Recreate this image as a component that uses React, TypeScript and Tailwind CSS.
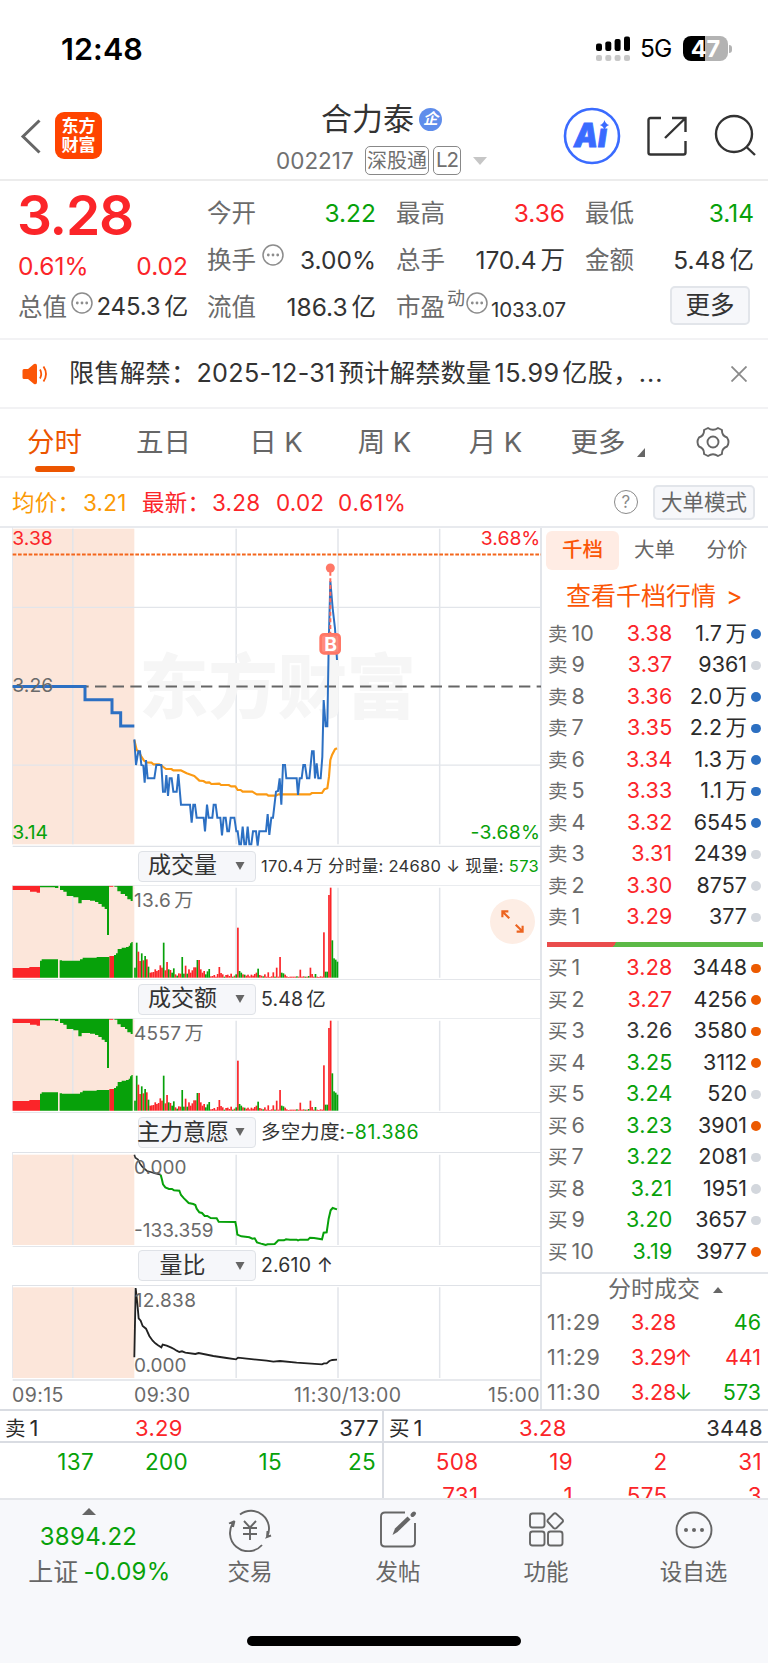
import type { ReactNode } from 'react';
import clsx from 'clsx';

const AUCTION = '#fce6da';
const RED = '#fb2529';
const GREEN = '#07a10a';

const sells = [
  ['10', '3.38', '1.7万', 'b'],
  ['9', '3.37', '9361', 'g'],
  ['8', '3.36', '2.0万', 'b'],
  ['7', '3.35', '2.2万', 'b'],
  ['6', '3.34', '1.3万', 'b'],
  ['5', '3.33', '1.1万', 'b'],
  ['4', '3.32', '6545', 'b'],
  ['3', '3.31', '2439', 'g'],
  ['2', '3.30', '8757', 'g'],
  ['1', '3.29', '377', 'g'],
];

const buys = [
  ['1', '3.28', '3448', 'o'],
  ['2', '3.27', '4256', 'o'],
  ['3', '3.26', '3580', 'o'],
  ['4', '3.25', '3112', 'o'],
  ['5', '3.24', '520', 'g'],
  ['6', '3.23', '3901', 'o'],
  ['7', '3.22', '2081', 'g'],
  ['8', '3.21', '1951', 'g'],
  ['9', '3.20', '3657', 'g'],
  ['10', '3.19', '3977', 'o'],
];

const trades = [
  { time: '11:29', price: '3.28', arrow: '', qty: '46', up: false },
  { time: '11:29', price: '3.29', arrow: '↑', qty: '441', up: true },
  { time: '11:30', price: '3.28', arrow: '↓', qty: '573', up: false },
];

// one entry per minute: height + colour
const minuteBars =
  '30g 105g 78r 50r 73g 52r 65g 55r 33g 15r 16r 17r 25r 20r 23r 37r 30r 105g 22r 47r 25g 23r 15g 28g 10r 6g 13r 12r 62g 12g 36r 12g 25r 15r 22r 31r 31r 53g 53r 25r 15r 20r 10g 19g 26g 4r 5r 8r 3r 11r 32r 14r 10r 3g 8r 9r 5r 12r 3g 6r 10g 150r 20g 15g 10r 9g 6r 9r 4r 9r 6r 11r 15r 27g 8r 6r 4g 10r 3r 16r 2r 4r 16r 3g 30r 3r 62r 15g 13g 9r 4r 2r 3r 3r 3r 3r 4g 3r 24r 3r 4r 3g 3r 5g 30r 11r 3r 11g 3r 2r 4r 3r 136r 18g 18g 248r 270r 112g 58g 54g 48g'.split(' ');

const priceLine =
  '403,658 408,735 415,694 420,694 424,735 430,737 434,788 438,720 443,775 463,775 469,735 484,735 489,815 495,815 499,765 504,828 509,775 515,775 520,815 530,815 535,762 543,854 570,854 575,908 580,854 585,854 590,893 611,893 615,934 621,854 626,893 637,893 641,854 647,854 652,893 661,893 666,946 671,893 677,893 682,934 687,934 692,893 703,893 709,934 713,934 718,973 723,973 728,920 733,973 738,973 743,920 748,973 754,973 759,934 768,934 773,977 778,934 798,934 803,882 808,945 814,893 819,893 828,815 834,813 839,775 844,854 849,735 855,735 859,775 890,775 894,825 899,775 905,775 910,735 915,735 921,775 928,775 936,694 941,694 945,775 950,730 955,775 962,775 967,710 971,540 977,619 982,619 986,380 991,183 998,265 1005,325 1011,420';

const avgLine =
  '403,660 410,690 416,694 424,710 432,722 440,727 455,728 460,733 478,733 486,738 498,747 514,747 520,751 542,751 560,760 583,768 598,782 610,783 618,788 628,787 634,792 658,791 663,795 686,795 693,799 706,799 713,810 722,810 728,815 757,815 770,823 800,823 805,827 828,827 835,823 930,823 936,819 966,819 973,808 982,805 987,770 991,720 996,705 1005,688 1011,685';

// number with its 万 / 亿 unit set slightly apart
function Num({ v }: { v: string }) {
  const unit = v.match(/[万亿]$/)?.[0];
  if (!unit) return <>{v}</>;
  return (
    <>
      {v.slice(0, -1)}
      <span className="ml-[0.16em]">{unit}</span>
    </>
  );
}

function Dots() {
  return (
    <svg viewBox="0 0 22 22" className="h-[22px] w-[22px] shrink-0" fill="none">
      <circle cx="11" cy="11" r="10" stroke="#8c8c8c" strokeWidth="1.5" />
      <g fill="#8c8c8c">
        <circle cx="6.3" cy="11" r="1.4" />
        <circle cx="11" cy="11" r="1.4" />
        <circle cx="15.7" cy="11" r="1.4" />
      </g>
    </svg>
  );
}

function Stat({ label, value, color = 'text-[#333]', extra }: { label: string; value: string; color?: string; extra?: ReactNode }) {
  return (
    <div className="flex h-[47px] w-[169px] items-center justify-between whitespace-nowrap">
      <span className="flex items-center text-[24.5px] text-[#6b6b6b]">
        {label}
        {extra}
      </span>
      <span className={clsx('text-[24.5px]', color)}>
        <Num v={value} />
      </span>
    </div>
  );
}

function StatusBar() {
  return (
    <div className="flex h-[96px] items-center justify-between pr-[36px] pl-[61px]">
      <span className="pt-[2px] text-[30.5px] font-semibold tracking-[0.1px] text-black">12:48</span>
      <div className="flex items-center pt-[2px]">
        <svg width="34" height="26" viewBox="0 0 34 26">
          <g fill="#000">
            <rect x="0" y="7.5" width="6" height="7.5" rx="2" />
            <rect x="9.3" y="5.5" width="6" height="9.5" rx="2" />
            <rect x="18.6" y="3" width="6" height="12" rx="2" />
            <rect x="28" y="0.5" width="6" height="14.5" rx="2" />
          </g>
          <g fill="#c8c8c8">
            <rect x="0" y="19" width="6" height="6" rx="2" />
            <rect x="9.3" y="19" width="6" height="6" rx="2" />
            <rect x="18.6" y="19" width="6" height="6" rx="2" />
            <rect x="28" y="19" width="6" height="6" rx="2" />
          </g>
        </svg>
        <span className="ml-[10px] w-[32px] text-[24.5px] tracking-[-0.8px] whitespace-nowrap text-black">5G</span>
        <div className="ml-[11px] flex h-[25px] w-[45px] items-center justify-center rounded-[8px] bg-[linear-gradient(to_right,#000_48%,#b3b3b3_48%)] text-[23.5px] font-bold text-white">
          47
        </div>
        <div className="ml-[1px] h-[8px] w-[3px] rounded-r-full bg-[#b3b3b3]" />
      </div>
    </div>
  );
}

function Header() {
  return (
    <header className="flex h-[85px] border-b-2 border-[#ececec]">
      <svg className="mt-[23px] ml-[20px] h-[35px] w-[22px]" viewBox="0 0 22 35" fill="none">
        <path d="M19.5 1.5 3 17.5l16.5 16" stroke="#666" strokeWidth="3" />
      </svg>
      <div className="mt-[16px] ml-[13px] flex h-[47px] w-[47px] flex-col items-center justify-center rounded-[9px] bg-[#ff4400] text-[17px] leading-[19px] font-bold text-white">
        <span>东方</span>
        <span>财富</span>
      </div>
      <div className="ml-[150px] flex w-[240px] flex-col">
        <div className="mt-[4px] flex h-[38px] items-center justify-center pl-[19px] text-[31px] text-[#333]">
          合力泰
          <span className="ml-[5px] flex h-[23px] w-[23px] items-center justify-center rounded-full bg-[#5f8deb] text-[15px] font-bold text-white italic">
            企
          </span>
        </div>
        <div className="mt-[8px] flex h-[29px] items-center pl-[24px] text-[#707070]">
          <span className="w-[89px] text-[22.5px] whitespace-nowrap">002217</span>
          <span className="flex h-[29px] w-[64px] shrink-0 items-center justify-center rounded-[5px] border border-[#888] text-[20px]">深股通</span>
          <span className="ml-[4px] flex h-[29px] w-[28px] shrink-0 items-center justify-center rounded-[5px] border border-[#888] text-[20.5px] tracking-[-1px]">L2</span>
          <svg className="ml-[12px] h-[8px] w-[14px] shrink-0" viewBox="0 0 14 8">
            <path d="M0 0h14L7 8z" fill="#c6c6c6" />
          </svg>
        </div>
      </div>
      <svg className="mt-[11px] ml-[71px] h-[58px] w-[58px] shrink-0" viewBox="0 0 58 58">
        <circle cx="29" cy="29" r="27" fill="none" stroke="#3a6bff" strokeWidth="2.6" />
        <text x="11" y="40" fontSize="33" fontWeight="900" fontStyle="italic" fill="#3a6bff" stroke="#3a6bff" strokeWidth="0.8" fontFamily="Inter" textLength="33" lengthAdjust="spacingAndGlyphs">
          Aı
        </text>
        <path d="M41.500 13q1.200 4.200 4.700 5-3.500 1-4.700 5-1.200-4-4.700-5 3.500-.8 4.700-5z" fill="#3a6bff" />
      </svg>
      <svg className="mt-[20px] ml-[26px] h-[40px] w-[40px] shrink-0" viewBox="0 0 40 40" fill="none" stroke="#333" strokeWidth="2.4">
        <path d="M14 2H3.500Q1.500 2 1.500 4V36.500Q1.500 38.500 3.500 38.500H36.500Q38.500 38.500 38.500 36.500V25M25 2H38.500V16M38 2.500 18 22" />
      </svg>
      <svg className="mt-[18px] ml-[27px] h-[43px] w-[43px] shrink-0" viewBox="0 0 43 43" fill="none" stroke="#333" strokeWidth="2.400">
        <circle cx="20" cy="20" r="18" />
        <path d="M32.500 33l8.500 8" />
      </svg>
    </header>
  );
}

function Quote() {
  return (
    <section className="flex h-[159px] border-b-2 border-[#f2f2f4] pl-[19px]">
      <div className="w-[169px]">
        <div className="mt-[6px] -ml-[2px] h-[56px] text-[55px] leading-[56px] font-semibold tracking-[-1.2px] text-[#fb2529]">3.28</div>
        <div className="mt-[8px] flex h-[32px] items-center justify-between text-[24.5px] text-[#fb2529]">
          <span className="-ml-[1px]">0.61%</span>
          <span>0.02</span>
        </div>
        <div className="mt-[1px] flex h-[47px] items-center justify-between text-[24.5px]">
          <span className="-ml-[1px] text-[#6b6b6b]">总值</span>
          <span className="-mt-[10px]">
            <Dots />
          </span>
          <span className="text-[24px] tracking-[-0.2px] text-[#333]">
            <Num v="245.3亿" />
          </span>
        </div>
      </div>
      <div className="mt-[9px] ml-[19px] grid grid-cols-[189px_189px_169px] content-start">
        <Stat label="今开" value="3.22" color="text-[#07a10a]" />
        <Stat label="最高" value="3.36" color="text-[#fb2529]" />
        <Stat label="最低" value="3.14" color="text-[#07a10a]" />
        <Stat label="换手" value="3.00%" extra={<span className="-mt-[10px] ml-[6px]"><Dots /></span>} />
        <Stat label="总手" value="170.4万" />
        <Stat label="金额" value="5.48亿" />
        <Stat label="流值" value="186.3亿" />
        <div className="flex h-[47px] w-[175px] items-center text-[24.500px] whitespace-nowrap text-[#6b6b6b]">
          市盈
          <span className="-mt-[18px] ml-[2px] text-[18px]">动</span>
          <span className="-mt-[10px] ml-[1px]">
            <Dots />
          </span>
          <span className="mt-[5px] ml-[3px] text-[20.500px] tracking-[-0.1px] text-[#333]">1033.07</span>
        </div>
        <div className="flex h-[42px] w-[165px] items-center justify-end">
          <button className="h-[39px] w-[80px] rounded-[5px] border-2 border-[#e2e5ea] bg-[#f6f7fa] text-[24.500px] leading-[34px] text-[#333]">更多</button>
        </div>
      </div>
    </section>
  );
}

function Notice() {
  return (
    <section className="flex h-[69px] items-center border-b-2 border-[#f2f2f4]">
      <svg className="ml-[22px] h-[22px] w-[26px]" viewBox="0 0 26 22" fill="none">
        <path d="M0.500 7.500Q0.500 6 2 6H6L12 1Q15 0 15 3V19Q15 22 12 21L6 16H2Q0.500 16 0.500 14.500Z" fill="#fb5607" />
        <path d="M18 6.500Q20.500 11 18 15.500M21.500 3.500Q26.500 11 21.500 18.500" stroke="#fb5607" strokeWidth="1.8" />
      </svg>
      <span className="ml-[21px] w-[611px] text-[25.200px] tracking-[0.3px] whitespace-nowrap text-[#333]">
        限售解禁：<span className="mr-[3px]">2025-12-31</span>预计解禁数量<span className="mx-[3px]">15.99</span>亿股，<span className="tracking-[1px]">...</span>
      </span>
      <svg className="ml-[51px] h-[16px] w-[16px]" viewBox="0 0 16 16" stroke="#8a8a8a" strokeWidth="1.8">
        <path d="M0.500 0.500l15 15M15.500 0.500l-15 15" />
      </svg>
    </section>
  );
}

function Tabs() {
  return (
    <nav className="flex h-[69px] items-center border-b-2 border-[#f2f2f4] text-[27.5px] text-[#666]">
      <div className="relative w-[109px] text-center text-[#ec5500]">
        分时
        <span className="absolute top-[40px] left-[35px] h-[6px] w-[40px] rounded-full bg-[#ec5500]" />
      </div>
      <span className="w-[109px] text-center">五日</span>
      <span className="w-[116px] text-center">日 K</span>
      <span className="w-[101px] text-center">周 K</span>
      <span className="w-[121px] text-center">月 K</span>
      <span className="w-[84px] text-center">更多</span>
      <svg className="mt-[19px] -ml-[3px] h-[9px] w-[8px]" viewBox="0 0 8 9">
        <path d="M8 0V9H0z" fill="#666" />
      </svg>
      <svg className="-mt-[1px] ml-[51px] h-[32px] w-[34px]" viewBox="0 0 34 32" fill="none" stroke="#666" strokeWidth="1.9">
        <path d="M12 2Q17 5.500 22 2L26 4Q25.500 9.500 31 11.500Q34 16 31 20.500Q25.500 22.500 26 28L22 30Q17 26.500 12 30L8 28Q8.500 22.500 3 20.500Q0 16 3 11.500Q8.500 9.500 8 4Z" strokeLinejoin="round" />
        <circle cx="17" cy="16" r="5.500" />
      </svg>
    </nav>
  );
}

function InfoRow() {
  return (
    <div className="flex h-[48px] items-center text-[22.5px] tracking-[0.2px] whitespace-nowrap text-[#fb2529]">
      <span className="ml-[12px] w-[71px] text-[#fb9a06]">均价：</span>
      <span className="w-[59px] text-[#fb9a06]">3.21</span>
      <span className="w-[70px]">最新：</span>
      <span className="w-[64px]">3.28</span>
      <span className="w-[62px]">0.02</span>
      <span className="w-[276px] tracking-[0.8px]">0.61%</span>
      <span className="flex h-[24px] w-[24px] items-center justify-center rounded-full border-[1.5px] border-[#8a8a8a] text-[17px] text-[#8a8a8a]">?</span>
      <button className="ml-[15px] h-[35px] w-[102px] rounded-[5px] border-2 border-[#e2e5ea] bg-[#f6f7fa] text-[21.500px] leading-[30px] tracking-normal text-[#666]">大单模式</button>
    </div>
  );
}

// vertical grid lines shared by all the panels
function Grid({ top, bottom }: { top: number; bottom: number }) {
  return (
    <g>
      <rect x="38" y={top} width="365" height={bottom - top} fill={AUCTION} />
      <path d={`M218.500 ${top}V${bottom}M708.500 ${top}V${bottom}M1014 ${top}V${bottom}M1319 ${top}V${bottom}`} stroke="#e2e5ea" strokeWidth="4.500" />
      <path d={`M37.500 ${top - 8}V${bottom}`} stroke="#e2e5ea" strokeWidth="2.500" />
    </g>
  );
}

function PricePanel() {
  return (
    <svg className="-mt-[1px] block h-[320px] w-[541px]" viewBox="0 21 1623 960" fontFamily="Inter" fontSize="58">
      <Grid top={26} bottom={973} />
      <path d="M38 262H1623M38 735.500H1623" stroke="#e2e5ea" strokeWidth="4" />
      <path d="M38 979.500H1623" stroke="#dfe2e7" strokeWidth="4" />
      <text x="418" y="578" fontSize="212" fontWeight="900" fontFamily="'Noto Sans CJK SC'" fill="#f6f6f6" textLength="830" lengthAdjust="spacingAndGlyphs">
        东方财富
      </text>
      <path d="M38 103.500H1623" stroke="#f4661c" strokeWidth="6" strokeDasharray="11 5" />
      <path d="M38 499.500H1623" stroke="#666" strokeWidth="6" strokeDasharray="34 19" strokeDashoffset="18" />
      <text x="37" y="76" fill={RED}>3.38</text>
      <text x="37" y="957" fill={GREEN}>3.14</text>
      <text x="1621" y="76" fill={RED} textAnchor="end">3.68%</text>
      <text x="1621" y="957" fill={GREEN} textAnchor="end" letterSpacing="0.8">-3.68%</text>
      <path d="M38 499.500H255V539H336V578H362V618H403" fill="none" stroke="#2c70c3" strokeWidth="9" />
      <text x="37" y="516" fill="#6a6a6a">3.26</text>
      <polyline points={avgLine} fill="none" stroke="#fb9a14" strokeWidth="6.500" strokeLinejoin="round" />
      <polyline points={priceLine} fill="none" stroke="#2c70c3" strokeWidth="6" />
      <rect x="962" y="343" width="57" height="57" rx="10" fill="#fff" fillOpacity="0.600" stroke="#ff7766" strokeWidth="8" />
      <rect x="962" y="343" width="57" height="57" rx="10" fill="#ff7766" fillOpacity="0.850" />
      <path d="M991 155V339" stroke="#ff6a5a" strokeWidth="6" strokeDasharray="12 8" />
      <circle cx="991" cy="144" r="13.500" fill="#ff7766" />
      <text x="992" y="392" textAnchor="middle" fill="#fff" fontSize="58" fontWeight="700">B</text>
    </svg>
  );
}

function VolumePanel({ value, unit }: { value: string; unit: string }) {
  return (
    <svg className="block h-[95px] w-[541px]" viewBox="0 135 1623 285" fontFamily="Inter, 'Noto Sans CJK SC'" fontSize="57">
      <Grid top={143} bottom={413} />
      <rect x="38" y="137" width="365" height="10" fill={AUCTION} />
      <path d="M38 137V150H90V155H110V158H120V137ZM327 137V140H340V137ZM38 413V384H88V381H120V413ZM328 413V348H342V413Z" fill={RED} />
      <path
        d="M120 137V142H165V144H175V137ZM180 137V150H190V155H200V168H220V172H235V190H245V180H270V182H285V186H295V192H305V200H314V207H321V285H327V137ZM343 137V140H352V154H362V162H375V168H382V178H392V183H398V137ZM120 413V362H125V358H174V413ZM179 413V361H186V362H240V358H248V353H290V351H328V413ZM342 413V345H348V340H353V327H365V323H378V321H386V317H390V310H394V306H398V413Z"
        fill={GREEN}
      />
      {minuteBars.map((bar, i) => {
        const h = parseInt(bar, 10);
        return <rect key={i} x={402.5 + i * 5.06} y={413 - h} width="5.060" height={h} fill={bar.endsWith('r') ? RED : GREEN} />;
      })}
      <text x="402" y="201" fill="#6a6a6a" letterSpacing="1">
        {value}
        <tspan dx="9">{unit}</tspan>
      </text>
      <path d="M38 135.500H1623M38 419H1623" stroke="#dfe2e7" strokeWidth="3" />
    </svg>
  );
}

function WillPanel() {
  return (
    <svg className="block h-[95px] w-[541px]" viewBox="0 125 1623 285" fontFamily="Inter" fontSize="57">
      <Grid top={133} bottom={404} />
      <polyline points="403,133 406,142 414,148 420,160 426,168 434,176 441,182 452,185 466,189 482,193" fill="none" stroke="#333" strokeWidth="5" />
      <polyline
        points="482,193 486,208 489,222 496,231 507,236 516,236 522,240 538,241 543,254 552,264 566,278 580,281 586,284 590,295 598,306 606,308 614,317 622,317 632,323 650,324 656,334 706,335 709,350 712,373 724,378 748,381 757,385 764,384 771,396 783,400 790,402 797,404 803,402 824,401 830,395 835,390 852,390 858,387 870,388 890,388 894,390 900,388 924,388 930,382 942,383 966,387 971,367 980,366 986,325 992,300 998,293 1011,297"
        fill="none"
        stroke={GREEN}
        strokeWidth="6"
      />
      <text x="402" y="190" fill="#6a6a6a">0.000</text>
      <text x="402" y="380" fill="#6a6a6a">-133.359</text>
      <path d="M38 126.500H1623M38 409H1623" stroke="#dfe2e7" strokeWidth="3" />
    </svg>
  );
}

function RatioPanel() {
  return (
    <svg className="block h-[96px] w-[541px]" viewBox="0 525 1623 288" fontFamily="Inter" fontSize="57">
      <Grid top={532} bottom={804} />
      <polyline
        points="403,742 407,534 412,580 416,625 422,632 428,648 438,656 448,678 458,692 466,700 474,706 484,712 488,704 500,707 514,713 522,717 530,722 538,726 546,724 556,728 586,732 596,729 640,738 680,744 708,748 714,743 740,746 800,752 820,755 840,753 890,758 966,763 972,760 980,760 988,753 997,750 1011,749"
        fill="none"
        stroke="#222"
        strokeWidth="5.500"
      />
      <text x="404" y="590" fill="#6a6a6a" letterSpacing="1">12.838</text>
      <text x="402" y="785" fill="#6a6a6a">0.000</text>
      <path d="M38 526H1623M38 810H1623" stroke="#dfe2e7" strokeWidth="4" />
    </svg>
  );
}

function IndicatorRow({ name, children }: { name: string; children: ReactNode }) {
  return (
    <div className="flex h-[38.2px] items-center pl-[138px] text-[#333]">
      <div className="flex h-[31px] w-[118px] shrink-0 items-center rounded-[4px] border-[1.5px] border-[#dfe2e7] bg-[#f6f7fa]">
        <span className="-ml-[2px] w-[91px] text-center text-[23px] whitespace-nowrap">{name}</span>
        <svg className="ml-[7px] h-[8px] w-[10px]" viewBox="0 0 9 8">
          <path d="M0 0h9L4.500 8z" fill="#666" />
        </svg>
      </div>
      <div className="ml-[5px] text-[19.5px] tracking-[0.15px] whitespace-nowrap">{children}</div>
    </div>
  );
}

function Charts() {
  return (
    <div className="relative w-[542px] shrink-0 border-r-2 border-[#e2e5ea]">
      <PricePanel />
      <IndicatorRow name="成交量">
        <span className="text-[16.5px] tracking-[0.3px]">
          <Num v="170.4万" /> 分时量: 24680 ↓ 现量: <span className="text-[#07a10a]">573</span>
        </span>
      </IndicatorRow>
      <VolumePanel value="13.6" unit="万" />
      <IndicatorRow name="成交额">
        <Num v="5.48亿" />
      </IndicatorRow>
      <VolumePanel value="4557" unit="万" />
      <IndicatorRow name="主力意愿">
        多空力度:<span className="tracking-[0.5px] text-[#07a10a]">-81.386</span>
      </IndicatorRow>
      <WillPanel />
      <IndicatorRow name="量比">2.610 ↑</IndicatorRow>
      <RatioPanel />
      <div className="flex h-[29px] items-center pl-[12px] text-[19.500px] tracking-[0.4px] whitespace-nowrap text-[#6a6a6a]">
        <span className="w-[122px]">09:15</span>
        <span className="w-[160px]">09:30</span>
        <span className="w-[194px]">11:30/13:00</span>
        <span>15:00</span>
      </div>
      <div className="absolute top-[371px] left-[490px] flex h-[45px] w-[45px] items-center justify-center rounded-full bg-[#fdede4]">
        <svg className="h-[23px] w-[23px]" viewBox="0 0 25 25" fill="none" stroke="#ec6420" strokeWidth="2.300">
          <path d="M1.500 8V1.500H8M1.500 1.500l7.500 7.500M23.500 17v6.500H17M23.500 23.500 16 16" />
        </svg>
      </div>
    </div>
  );
}

function Level({ side, row }: { side: string; row: string[] }) {
  const [level, price, qty, dot] = row;
  const p = parseFloat(price);
  return (
    <div className="flex h-[31.5px] items-center text-[21.5px] whitespace-nowrap">
      <span className="w-[52px] text-[#6b6b6b]">
        <span className="mr-[4px] text-[19.500px]">{side}</span>
        {level}
      </span>
      <span className={clsx('w-[72.5px] text-right tracking-[0.2px]', p > 3.26 ? 'text-[#fb2529]' : p < 3.26 ? 'text-[#07a10a]' : 'text-[#333]')}>{price}</span>
      <span className="w-[74.5px] text-right text-[#2b2b2b]">
        <Num v={qty} />
      </span>
      <span className={clsx('ml-[4px] h-[9.500px] w-[9.500px] rounded-full', dot === 'b' ? 'bg-[#2c6fc1]' : dot === 'o' ? 'bg-[#ec5a00]' : 'bg-[#d3d7dd]')} />
    </div>
  );
}

function OrderBook() {
  return (
    <div className="-mt-[0.5px] w-[226px]">
      <div className="pl-[4px]">
        <div className="flex h-[43px] items-center pt-[3px] text-[20.5px] text-[#666]">
          <span className="flex h-[39px] w-[73px] items-center justify-center rounded-[6px] bg-[#ffece4] font-medium text-[#fb5607]">千档</span>
          <span className="w-[71px] text-center">大单</span>
          <span className="w-[74px] text-center">分价</span>
        </div>
        <div className="flex h-[47.5px] items-center pt-[3px] pl-[20px] text-[25px] whitespace-nowrap text-[#fb5607]">
          查看千档行情<span className="ml-[10px]">&gt;</span>
        </div>
      </div>
      <div className="pl-[6px]">
        {sells.map((row) => (
          <Level key={row[0]} side="卖" row={row} />
        ))}
      </div>
      <div className="flex h-[19.500px] items-center pl-[5px] pt-[3px]">
        <div className="h-[5px] w-[216px] bg-[linear-gradient(120deg,#ea4c4c_31.500%,#5cb947_31.500%)]" />
      </div>
      <div className="h-[321.500px] border-b-2 border-[#e2e5ea] pl-[6px]">
        {buys.map((row) => (
          <Level key={row[0]} side="买" row={row} />
        ))}
      </div>
      <div className="flex h-[31px] items-center pl-[66px] text-[23px] text-[#6b6b6b]">
        分时成交
        <svg className="ml-[13px] h-[6px] w-[10px]" viewBox="0 0 10 6">
          <path d="M0 6h10L5 0z" fill="#666" />
        </svg>
      </div>
      {trades.map((t, i) => (
        <div key={i} className="flex h-[35px] items-center pl-[5px] text-[21.500px] whitespace-nowrap text-[#fb2529]">
          <span className="w-[84px] tracking-[0.7px] text-[#6b6b6b]">{t.time}</span>
          <span className="w-[78px]">
            {t.price}
            <span className={clsx('-ml-[2px]', t.arrow === '↓' && 'text-[#07a10a]')}>{t.arrow}</span>
          </span>
          <span className={clsx('w-[52px] text-right', !t.up && 'text-[#07a10a]')}>{t.qty}</span>
        </div>
      ))}
    </div>
  );
}

function QueueSide({ name, price, qty, rows, color }: { name: string; price: string; qty: string; rows: string[][]; color: string }) {
  return (
    <div className="w-[384px] border-r-2 border-[#d9dce2] last:border-r-0">
      <div className="flex h-[32px] items-center border-b-2 border-[#d9dce2] pt-[4px] pl-[5px] text-[22px] text-[#2b2b2b]">
        <span className="w-[130px]">
          <span className="mr-[4px] text-[20.500px]">{name}</span>1
        </span>
        <span className="w-[109px] tracking-[0.3px] text-[#fb2529]">{price}</span>
        <span className="w-[135px] text-right tracking-[0.3px]">{qty}</span>
      </div>
      {rows.map((row, i) => (
        <div key={i} className={clsx('grid h-[34px] grid-cols-4 items-center pt-[3px] pr-[6px] text-right text-[22.500px] tracking-[0.3px]', color)}>
          {row.map((v, j) => (
            <span key={j}>{v}</span>
          ))}
        </div>
      ))}
    </div>
  );
}

function NavItem({ label, className, children }: { label: string; className: string; children: ReactNode }) {
  return (
    <div className={clsx('flex flex-col items-center text-[22.500px] text-[#666]', className)}>
      <svg className="mt-[8px] h-[44px] w-[44px]" viewBox="0 0 44 44" fill="none" stroke="#666" strokeWidth="1.900">
        {children}
      </svg>
      <span className="mt-[3px] leading-[34px]">{label}</span>
    </div>
  );
}

function BottomNav() {
  return (
    <footer className="relative flex h-[165px] border-t-2 border-[#e4e6ea] bg-[#f7f8fb]">
      <div className="flex w-[177px] flex-col items-center text-[24px] tracking-[0.3px] whitespace-nowrap text-[#07a10a]">
        <svg className="mt-[8px] h-[7px] w-[14px]" viewBox="0 0 14 7">
          <path d="M0 7h14L7 0z" fill="#666" />
        </svg>
        <span className="mt-[5px] leading-[34px]">3894.22</span>
        <span className="mt-[1px] ml-[22px] flex leading-[34px]">
          <span className="mr-[5px] text-[25px] tracking-normal text-[#666]">上证</span>-0.09%
        </span>
      </div>
      <NavItem label="交易" className="w-[146px]">
        <path d="M12 6.500A18 18 0 0 1 39 29l4-1.500M39 29l.5-6M34 37A18 18 0 0 1 6.500 13L1 15.500M6.500 13l-1.500 6" />
        <path d="M16 13l6 6.500 6-6.500M15 20h14M15 26h14M22 20v12" />
      </NavItem>
      <NavItem label="发帖" className="w-[150px]">
        <path d="M29 4.500H9Q5 4.500 5 8.500V34.500Q5 38.500 9 38.500H35Q39 38.500 39 34.500V15" />
        <path d="M16.500 27 19 20.500 31.500 8.500 34.500 11.500 21.500 24Z" fill="#666" stroke="none" />
        <path d="M36.500 7l1.500-1.500" strokeWidth="4" strokeLinecap="round" />
      </NavItem>
      <NavItem label="功能" className="w-[146px]">
        <rect x="6" y="5.500" width="14.500" height="14" rx="2.500" />
        <rect x="6" y="23.500" width="14.500" height="14" rx="2.500" />
        <rect x="24" y="23.500" width="14.500" height="14" rx="2.500" />
        <path d="M29.500 6Q31 4.500 32.500 6L38.500 11.500Q39.500 13 38.500 14L32.500 20Q31 21 29.500 20L24 14Q23 13 24 11.500Z" />
      </NavItem>
      <NavItem label="设自选" className="w-[149px]">
        <circle cx="22" cy="22" r="17.500" />
        <g fill="#666" stroke="none">
          <circle cx="14" cy="22" r="2" />
          <circle cx="22" cy="22" r="2" />
          <circle cx="30" cy="22" r="2" />
        </g>
      </NavItem>
      <div className="absolute bottom-[17px] left-[247px] h-[10px] w-[274px] rounded-full bg-black" />
    </footer>
  );
}

export default function App() {
  return (
    <div className="h-[1663px] w-[768px] overflow-hidden bg-white font-['Inter','Noto_Sans_CJK_SC',sans-serif] leading-[1.2]">
      <StatusBar />
      <Header />
      <Quote />
      <Notice />
      <Tabs />
      <InfoRow />
      <main className="flex h-[883px] border-t-2 border-[#e8eaee]">
        <Charts />
        <OrderBook />
      </main>
      <section className="flex h-[89px] overflow-hidden border-t-2 border-[#d9dce2]">
        <QueueSide name="卖" price="3.29" qty="377" color="text-[#07a10a]" rows={[['137', '200', '15', '25']]} />
        <QueueSide
          name="买"
          price="3.28"
          qty="3448"
          color="text-[#fb2529]"
          rows={[
            ['508', '19', '2', '31'],
            ['731', '1', '575', '3'],
          ]}
        />
      </section>
      <BottomNav />
    </div>
  );
}
